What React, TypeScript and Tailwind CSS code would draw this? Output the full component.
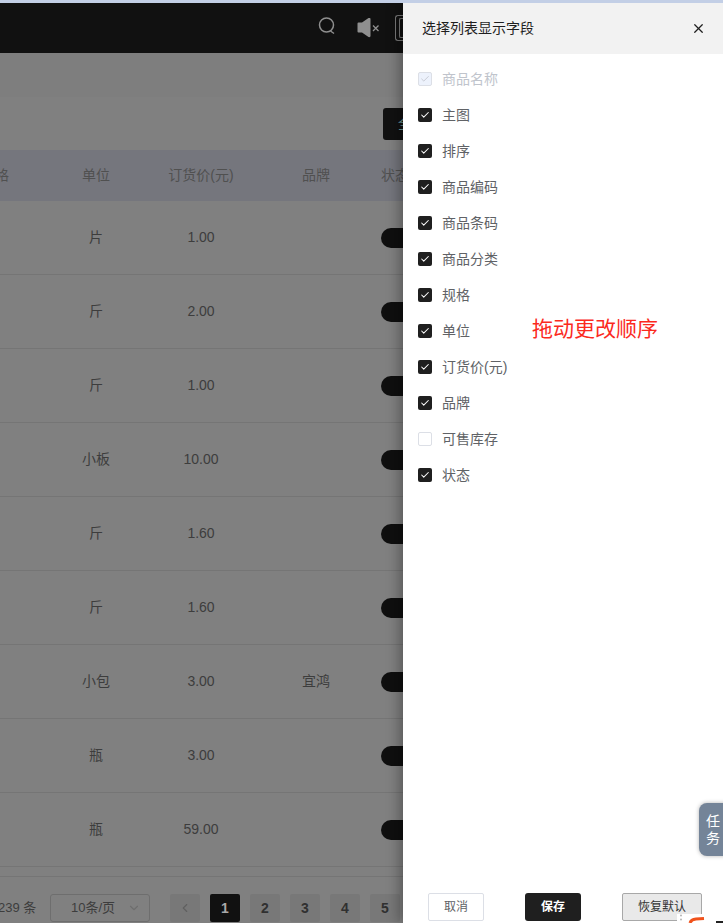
import { X, ChevronLeft, ChevronDown, Check } from 'lucide-react';

const cjk = "font-['Liberation_Sans','Noto_Sans_CJK_SC',sans-serif]";

const rows = [
  { unit: '片', price: '1.00', brand: '' },
  { unit: '斤', price: '2.00', brand: '' },
  { unit: '斤', price: '1.00', brand: '' },
  { unit: '小板', price: '10.00', brand: '' },
  { unit: '斤', price: '1.60', brand: '' },
  { unit: '斤', price: '1.60', brand: '' },
  { unit: '小包', price: '3.00', brand: '宜鸿' },
  { unit: '瓶', price: '3.00', brand: '' },
  { unit: '瓶', price: '59.00', brand: '' },
];

const fields = [
  { label: '商品名称', state: 'locked' },
  { label: '主图', state: 'on' },
  { label: '排序', state: 'on' },
  { label: '商品编码', state: 'on' },
  { label: '商品条码', state: 'on' },
  { label: '商品分类', state: 'on' },
  { label: '规格', state: 'on' },
  { label: '单位', state: 'on' },
  { label: '订货价(元)', state: 'on' },
  { label: '品牌', state: 'on' },
  { label: '可售库存', state: 'off' },
  { label: '状态', state: 'on' },
];

function FieldRow({ label, state }: { label: string; state: string }) {
  return (
    <div className="h-9 flex items-center gap-[10px]">
      {state === 'on' && (
        <span className="w-[14px] h-[14px] rounded-[2px] bg-[#1f1f1f] flex items-center justify-center">
          <Check size={10} strokeWidth={2.5} className="text-white" />
        </span>
      )}
      {state === 'off' && (
        <span className="w-[14px] h-[14px] rounded-[2px] border border-[#dcdfe6] bg-white" />
      )}
      {state === 'locked' && (
        <span className="w-[14px] h-[14px] rounded-[2px] border border-[#dcdfe6] bg-[#edf2fc] flex items-center justify-center">
          <Check size={10} strokeWidth={2} className="text-[#c0c4cc]" />
        </span>
      )}
      <span className={`text-[14px] ${state === 'locked' ? 'text-[#c0c4cc]' : 'text-[#606266]'}`}>
        {label}
      </span>
    </div>
  );
}

function PageButton({ n, active }: { n: string; active?: boolean }) {
  return (
    <span
      className={`w-[30px] h-7 rounded-[2px] flex items-center justify-center text-[14px] font-bold ${
        active ? 'bg-[#111111] text-[#a8a8a8]' : 'bg-[#787878] text-[#303030]'
      }`}
    >
      {n}
    </span>
  );
}

export default function App() {
  return (
    <div className={`${cjk} relative w-[723px] h-[923px] overflow-hidden bg-[#808080]`}>
      <div className="relative z-10 h-[3px] bg-[#c3cfe6]" />

      {/* Page behind the mask */}
      <div className="w-[403px] h-[920px] flex flex-col overflow-hidden">
        <div className="h-[50px] shrink-0 bg-[#111111] flex items-center justify-end overflow-hidden">
          <svg width="18" height="18" viewBox="0 0 18 18" className="-mt-1 mr-[21px]">
            <circle cx="8.500" cy="8" r="7" fill="none" stroke="#8f8f8f" strokeWidth="1.500" />
            <path d="M12.500 14l3.500 2.500" stroke="#8f8f8f" strokeWidth="1.500" />
          </svg>
          <svg width="23" height="20" viewBox="0 0 23 20" className="mr-[15px]">
            <path d="M0.500 5.500q0-1 1-1h3.500l6.500-4.500q2-.5 2 1v17q0 1.500-2 1l-6.500-4.500h-3.500q-1 0-1-1z" fill="#8f8f8f" />
            <path d="M16 7.500l5.500 5.500M21.500 7.500l-5.500 5.500" stroke="#8f8f8f" strokeWidth="1.300" />
          </svg>
          <span className="w-2 h-[26px] flex justify-end rounded-l-[3px] border-l border-y border-[#7a7a7a] py-[2px]">
            <span className="w-1 rounded-l-[2px] border-l border-y border-[#7a7a7a]" />
          </span>
        </div>

        <div className="h-[44px] shrink-0 bg-[#7e7e7e]" />

        <div className="h-[53px] shrink-0 bg-[#808080] flex items-start justify-end pt-[11px]">
          <span className="w-[20px] h-8 rounded-l-[3px] bg-[#111111] text-[13px] text-[#6f9a9b] pl-[15px] leading-8 overflow-hidden whitespace-nowrap">
            全
          </span>
        </div>

        <div className="h-[51px] shrink-0 bg-[#75767d] flex items-center text-[14px] text-[#505050] whitespace-nowrap">
          <span className="w-[48px] shrink-0 flex justify-end pr-[39px]">规格</span>
          <span className="w-[96px] shrink-0 text-center">单位</span>
          <span className="w-[114px] shrink-0 text-center">订货价(元)</span>
          <span className="w-[116px] shrink-0 text-center">品牌</span>
          <span className="ml-[7px] shrink-0">状态</span>
        </div>

        {rows.map((row, i) => (
          <div
            key={i}
            className="h-[74px] shrink-0 border-b border-[#757575] flex items-center text-[14px] text-[#3d3d3d]"
          >
            <span className="w-[48px] shrink-0" />
            <span className="w-[96px] shrink-0 text-center">{row.unit}</span>
            <span className="w-[114px] shrink-0 text-center">{row.price}</span>
            <span className="w-[116px] shrink-0 text-center">{row.brand}</span>
            <span className="ml-[7px] w-[30px] h-5 shrink-0 rounded-l-full bg-[#0f0f0f]" />
          </div>
        ))}

        <div className="h-[10px] shrink-0 border-b border-[#757575]" />

        <div className="h-[46px] shrink-0 flex items-start pt-[17px] text-[13px] text-[#3d3d3d] whitespace-nowrap">
          <span className="-ml-[2px] w-[52px] shrink-0 leading-7">239 条</span>
          <span className="w-[100px] h-7 shrink-0 rounded-[3px] border border-[#6e6e6e] flex items-center justify-between pl-5 pr-2">
            10条/页
            <ChevronDown size={14} className="text-[#6e6e6e]" />
          </span>
          <span className="w-[30px] h-7 shrink-0 ml-5 rounded-[2px] bg-[#787878] flex items-center justify-center">
            <ChevronLeft size={14} className="text-[#606060]" />
          </span>
          <div className="flex gap-[10px] ml-[10px] shrink-0">
            <PageButton n="1" active />
            <PageButton n="2" />
            <PageButton n="3" />
            <PageButton n="4" />
            <PageButton n="5" />
          </div>
        </div>
      </div>

      {/* Drawer */}
      <div className="absolute top-[3px] left-[403px] w-[320px] h-[920px] bg-white flex flex-col shadow-[-4px_0_12px_rgba(0,0,0,0.3)]">
        <div className="h-[51px] shrink-0 bg-[#f2f2f2] pl-[19px] pr-[17px] flex items-center justify-between text-[14px] text-[#1f1f1f]">
          选择列表显示字段
          <X size={15} className="text-[#1f1f1f]" />
        </div>
        <div className="pl-[15px] pt-[7px] flex-1">
          {fields.map((f) => (
            <FieldRow key={f.label} label={f.label} state={f.state} />
          ))}
        </div>
        <div className="h-[30px] shrink-0 pl-[25px] flex items-start text-[12px]">
          <span className="w-14 h-7 rounded-[2px] border border-[#dcdfe6] text-[#606266] flex items-center justify-center">
            取消
          </span>
          <span className="w-14 h-7 ml-[41px] rounded-[3px] bg-[#1f1f1f] text-white font-bold flex items-center justify-center">
            保存
          </span>
          <span className="w-20 h-7 ml-[41px] rounded-[2px] border border-[#a8a8a8] bg-[#e9e9e9] text-[#333333] flex items-center justify-center">
            恢复默认
          </span>
        </div>
      </div>

      {/* Annotation */}
      <span className="absolute left-[532px] top-[316px] text-[21px] leading-[26px] text-[#fb2a1e] whitespace-nowrap">
        拖动更改顺序
      </span>

      {/* Task tab */}
      <div className="absolute left-[699px] top-[803px] w-7 h-[53px] rounded-l-[8px] bg-[#748498] text-white text-[14px] leading-[17px] flex items-center justify-center text-center shadow-[0_0_4px_rgba(0,0,0,0.3)]">
        任<br />务
      </div>

      {/* Clipped toolbar fragment in the bottom corner */}
      <div className="absolute left-[677px] top-[914px] w-[46px] h-[9px] bg-white overflow-hidden">
        <svg width="46" height="9" viewBox="0 0 46 9">
          <circle cx="4" cy="1.500" r="1" fill="#b5b5b5" />
          <circle cx="4" cy="5.500" r="1" fill="#b5b5b5" />
          <path d="M13 9q1-3.500 6-4l8-.500" stroke="#f0521c" strokeWidth="3" fill="none" />
          <rect x="39" y="7" width="7" height="2" fill="#222222" />
        </svg>
      </div>
    </div>
  );
}
